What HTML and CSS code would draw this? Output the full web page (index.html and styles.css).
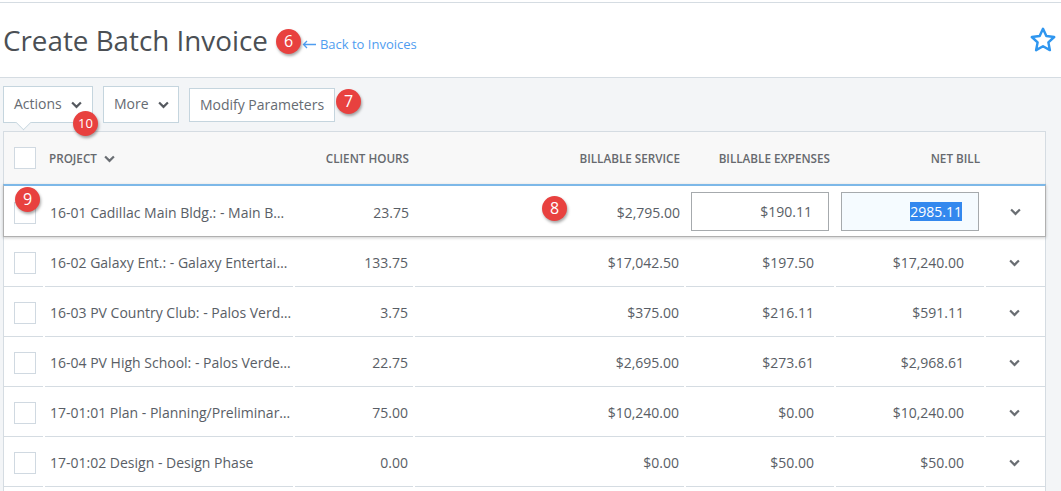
FILE: index.html
```html
<!DOCTYPE html>
<html lang="en">
<head>
<meta charset="utf-8">
<title>Create Batch Invoice</title>
<link rel="stylesheet" href="styles.css">
</head>
<body>
<svg class="defs" width="0" height="0"><symbol id="chev" viewBox="0 0 10 7"><path d="M1 1.2 5 5.2 9 1.2" fill="none" stroke="currentColor" stroke-width="2"/></symbol></svg>
<div class="top-rule"></div>
<header class="page-head">
  <h1 class="title">Create Batch Invoice</h1>
  <a class="back" href="#"><svg class="arrow" width="14" height="9" viewBox="0 0 14 9"><path d="M14 4.500H1.500M5 1 1.500 4.500 5 8" fill="none" stroke="#4f9df0" stroke-width="1.300"/></svg>Back to Invoices</a>
  <svg class="star" width="28" height="28" viewBox="0 0 26 26"><path d="M13 2.600 16.100 9.300 23.400 10.200 18 15.200 19.400 22.400 13 18.800 6.600 22.400 8 15.200 2.600 10.200 9.900 9.300Z" fill="none" stroke="#2f96ef" stroke-width="2.300" stroke-linejoin="round"/></svg>
</header>
<div class="toolbar">
  <button class="btn btn-actions">Actions<svg class="chev"><use href="#chev"/></svg></button>
  <button class="btn btn-more">More<svg class="chev"><use href="#chev"/></svg></button>
  <button class="btn btn-modify">Modify Parameters</button>
</div>
<main class="table">
  <div class="row head">
    <div class="cell check"><span class="box"></span></div>
    <div class="cell project">PROJECT<svg class="chev"><use href="#chev"/></svg></div>
    <div class="cell num">CLIENT HOURS</div>
    <div class="cell num">BILLABLE SERVICE</div>
    <div class="cell num">BILLABLE EXPENSES</div>
    <div class="cell num">NET BILL</div>
    <div class="cell"></div>
  </div>
  <div class="row selected">
    <div class="cell check"><span class="box"></span></div>
    <div class="cell project">16-01 Cadillac Main Bldg.: - Main B…</div>
    <div class="cell num">23.75</div>
    <div class="cell num">$2,795.00</div>
    <div class="cell num input"><span class="field">$190.11</span></div>
    <div class="cell num input"><span class="field active"><span class="sel">2985.11</span></span></div>
    <div class="cell more"><svg class="chev"><use href="#chev"/></svg></div>
  </div>
  <div class="row">
    <div class="cell check"><span class="box"></span></div>
    <div class="cell project">16-02 Galaxy Ent.: - Galaxy Entertai…</div>
    <div class="cell num">133.75</div>
    <div class="cell num">$17,042.50</div>
    <div class="cell num pad">$197.50</div>
    <div class="cell num pad">$17,240.00</div>
    <div class="cell more"><svg class="chev"><use href="#chev"/></svg></div>
  </div>
  <div class="row">
    <div class="cell check"><span class="box"></span></div>
    <div class="cell project">16-03 PV Country Club: - Palos Verd…</div>
    <div class="cell num">3.75</div>
    <div class="cell num">$375.00</div>
    <div class="cell num pad">$216.11</div>
    <div class="cell num pad">$591.11</div>
    <div class="cell more"><svg class="chev"><use href="#chev"/></svg></div>
  </div>
  <div class="row">
    <div class="cell check"><span class="box"></span></div>
    <div class="cell project">16-04 PV High School: - Palos Verde…</div>
    <div class="cell num">22.75</div>
    <div class="cell num">$2,695.00</div>
    <div class="cell num pad">$273.61</div>
    <div class="cell num pad">$2,968.61</div>
    <div class="cell more"><svg class="chev"><use href="#chev"/></svg></div>
  </div>
  <div class="row">
    <div class="cell check"><span class="box"></span></div>
    <div class="cell project">17-01:01 Plan - Planning/Preliminar…</div>
    <div class="cell num">75.00</div>
    <div class="cell num">$10,240.00</div>
    <div class="cell num pad">$0.00</div>
    <div class="cell num pad">$10,240.00</div>
    <div class="cell more"><svg class="chev"><use href="#chev"/></svg></div>
  </div>
  <div class="row">
    <div class="cell check"><span class="box"></span></div>
    <div class="cell project">17-01:02 Design - Design Phase</div>
    <div class="cell num">0.00</div>
    <div class="cell num">$0.00</div>
    <div class="cell num pad">$50.00</div>
    <div class="cell num pad">$50.00</div>
    <div class="cell more"><svg class="chev"><use href="#chev"/></svg></div>
  </div>
</main>
<span class="badge b6">6</span>
<span class="badge b7">7</span>
<span class="badge b8">8</span>
<span class="badge b9">9</span>
<span class="badge b10">10</span>
</body>
</html>
```
FILE: styles.css
```css
* { box-sizing: border-box; }
html, body { height: 491px; overflow: hidden; }
body {
  margin: 0;
  position: relative;
  display: flex;
  flex-direction: column;
  background: #f3f5f7;
  font-family: "Open Sans", sans-serif;
  color: #55595f;
  font-size: 14px;
}
.defs { position: absolute; }
.top-rule { height: 3px; flex: none; background: #fff; border-bottom: 1px solid #d5dce2; }
.page-head {
  flex: none;
  height: 75px;
  display: flex;
  align-items: center;
  background: #fff;
  border-bottom: 1px solid #d5dce2;
  padding-left: 3px;
  padding-right: 4px;
}
.title { margin: 0 0 1px; font-weight: 400; font-size: 27.800px; color: #4b4f54; }
.back {
  display: flex;
  align-items: center;
  margin-left: 34px;
  margin-top: 8px;
  color: #4f9df0;
  font-size: 13px;
  text-decoration: none;
}
.arrow { margin-right: 4px; flex: none; }
.star { margin-left: auto; }
.toolbar { flex: none; height: 53px; display: flex; align-items: flex-start; padding: 8px 0 0 3px; }
.btn {
  font: inherit;
  font-size: 14px;
  color: #666b72;
  background: #fff;
  border: 1px solid #c5d5de;
  height: 37px;
  padding: 0 10px 2px;
  display: flex;
  align-items: center;
  white-space: nowrap;
}
.btn-actions { width: 90px; position: relative; }
.btn-actions::after {
  content: "";
  position: absolute;
  left: 13px;
  bottom: -7px;
  width: 12px;
  height: 12px;
  background: #fff;
  border-right: 1px solid #c5d5de;
  border-bottom: 1px solid #c5d5de;
  transform: rotate(45deg) scale(.85);
}
.btn-more { width: 76px; margin-left: 10px; }
.btn-modify { margin-left: 10px; margin-top: 2px; height: 34px; width: 146px; justify-content: center; padding: 0 0 1px; }
.chev { width: 11px; height: 8px; color: #6a6e73; margin-left: 10px; flex: none; }
.btn .chev { margin-left: 9px; margin-top: 3px; color: #55595f; }
.table {
  flex: 1;
  margin-left: 3px;
  width: 1043px;
  background: #fff;
  border: 1px solid #d5dce2;
  border-width: 1px 1px 0 1px;
}
.row {
  display: grid;
  grid-template-columns: 39px 248px 118px 269px 148px 148px 60px;
  column-gap: 2px;
  height: 50px;
  align-items: stretch;
}
.cell {
  display: flex;
  align-items: center;
  border-bottom: 1px solid #d5dce2;
  white-space: nowrap;
  color: #595e66;
  padding-left: 10px;
  padding-top: 2px;
}
.cell.check { padding-top: 3px; }
.project { padding-left: 5px; }
.num { justify-content: flex-end; padding-right: 5px; padding-left: 0; }
.pad { padding-right: 20px; }
.more { justify-content: flex-start; padding-left: 23px; }
.more .chev { margin-left: 0; }
.box { width: 22px; height: 22px; background: #fff; border: 1px solid #d0d9e1; flex: none; }
.head { height: 52px; background: #f8f8f8; }
.head .cell { border-bottom: 0; font-size: 11.700px; font-weight: 600; color: #66696e; padding-top: 0; }
.head .num { padding-right: 4px; }
.head .project { padding-left: 4px; }
.head .project .chev { margin-left: 7px; margin-top: 2px; }
.selected {
  position: relative;
  height: 53px;
  margin: 0 -1px;
  width: 1043px;
  padding-left: 1px;
  border-top: 2px solid #7db8e8;
  border-bottom: 1px solid #b0b0b0;
  border-left: 1px solid #b0b0b0;
  border-right: 1px solid #b0b0b0;
  box-shadow: 0 1px 3px rgba(0, 0, 0, .2);
  background: #fff;
}
.selected .cell { border-bottom: 0; padding-top: 3px; }
.selected .project { padding-left: 4px; }
.selected .more { padding-top: 1px; }
.selected > .cell.check { padding-left: 9px; padding-top: 4px; }
.selected .cell.input { padding-right: 6px; padding-top: 0; }
.field {
  width: 138px;
  height: 39px;
  border: 1px solid #a6aaad;
  display: flex;
  align-items: center;
  justify-content: flex-end;
  padding-right: 16px;
  background: #fff;
}
.field.active { background: #f5fbff; }
.sel { background: #3388ee; color: #fff; }
.badge {
  position: absolute;
  width: 25px;
  height: 25px;
  border-radius: 50%;
  background: #e8413f;
  color: #fff;
  font-size: 16px;
  line-height: 24px;
  text-align: center;
  box-shadow: 1px 2px 3px rgba(0, 0, 0, .35);
}
.b6 { left: 276px; top: 29px; }
.b7 { left: 336px; top: 89px; }
.b8 { left: 542px; top: 196px; }
.b9 { left: 15px; top: 187px; }
.b10 { left: 73px; top: 111px; font-size: 13px; }
```
